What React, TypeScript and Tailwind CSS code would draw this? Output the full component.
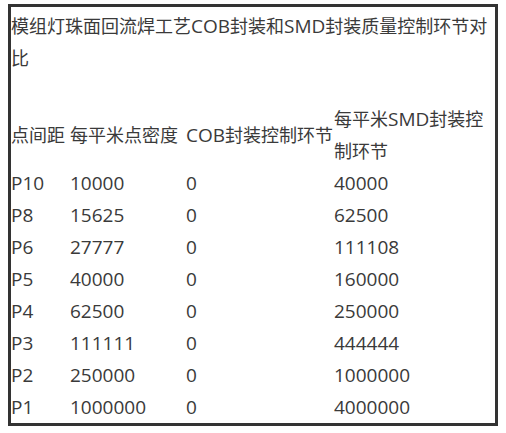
import React from "react";

const rows: [string, string, string, string][] = [
    ["P10", "10000", "0", "40000"],
    ["P8", "15625", "0", "62500"],
    ["P6", "27777", "0", "111108"],
    ["P5", "40000", "0", "160000"],
    ["P4", "62500", "0", "250000"],
    ["P3", "111111", "0", "444444"],
    ["P2", "250000", "0", "1000000"],
    ["P1", "1000000", "0", "4000000"],
];

// latin runs look a touch bigger than the CJK in the original
const L: React.FC<{ children: React.ReactNode }> = ({ children }) => (
    <span className="text-[19px]">{children}</span>
);

const App: React.FC = () => {
    return (
        <div className="min-h-[433px] w-[506px] bg-white pt-[4px] pl-[8px]">
            <div
                className="w-[490px] border-[3px] border-[#333] pt-[3px] text-[18px] leading-[32px] text-[#3a3a3a]"
                style={{ fontFamily: '"Open Sans", "Noto Sans CJK SC", sans-serif' }}
            >
                <p>
                    模组灯珠面回流焊工艺<L>COB</L>封装和<L>SMD</L>封装质量控制环节对比
                </p>
                <div className="h-[29px]" />
                <table className="w-full table-fixed border-collapse">
                    <colgroup>
                        <col className="w-[59px]" />
                        <col className="w-[116px]" />
                        <col className="w-[148px]" />
                        <col />
                    </colgroup>
                    <thead>
                        <tr>
                            <th className="p-0 text-left align-middle font-normal">点间距</th>
                            <th className="p-0 text-left align-middle font-normal">每平米点密度</th>
                            <th className="p-0 text-left align-middle font-normal">
                                <L>COB</L>封装控制环节
                            </th>
                            <th className="p-0 text-left align-middle font-normal">
                                每平米<L>SMD</L>封装控制环节
                            </th>
                        </tr>
                    </thead>
                    <tbody>
                        {rows.map((r) => (
                            <tr key={r[0]} className="h-[32px]">
                                {r.map((c, i) => (
                                    <td key={i} className="p-0 align-middle text-[19px]">
                                        {c}
                                    </td>
                                ))}
                            </tr>
                        ))}
                    </tbody>
                </table>
            </div>
        </div>
    );
};

export default App;
